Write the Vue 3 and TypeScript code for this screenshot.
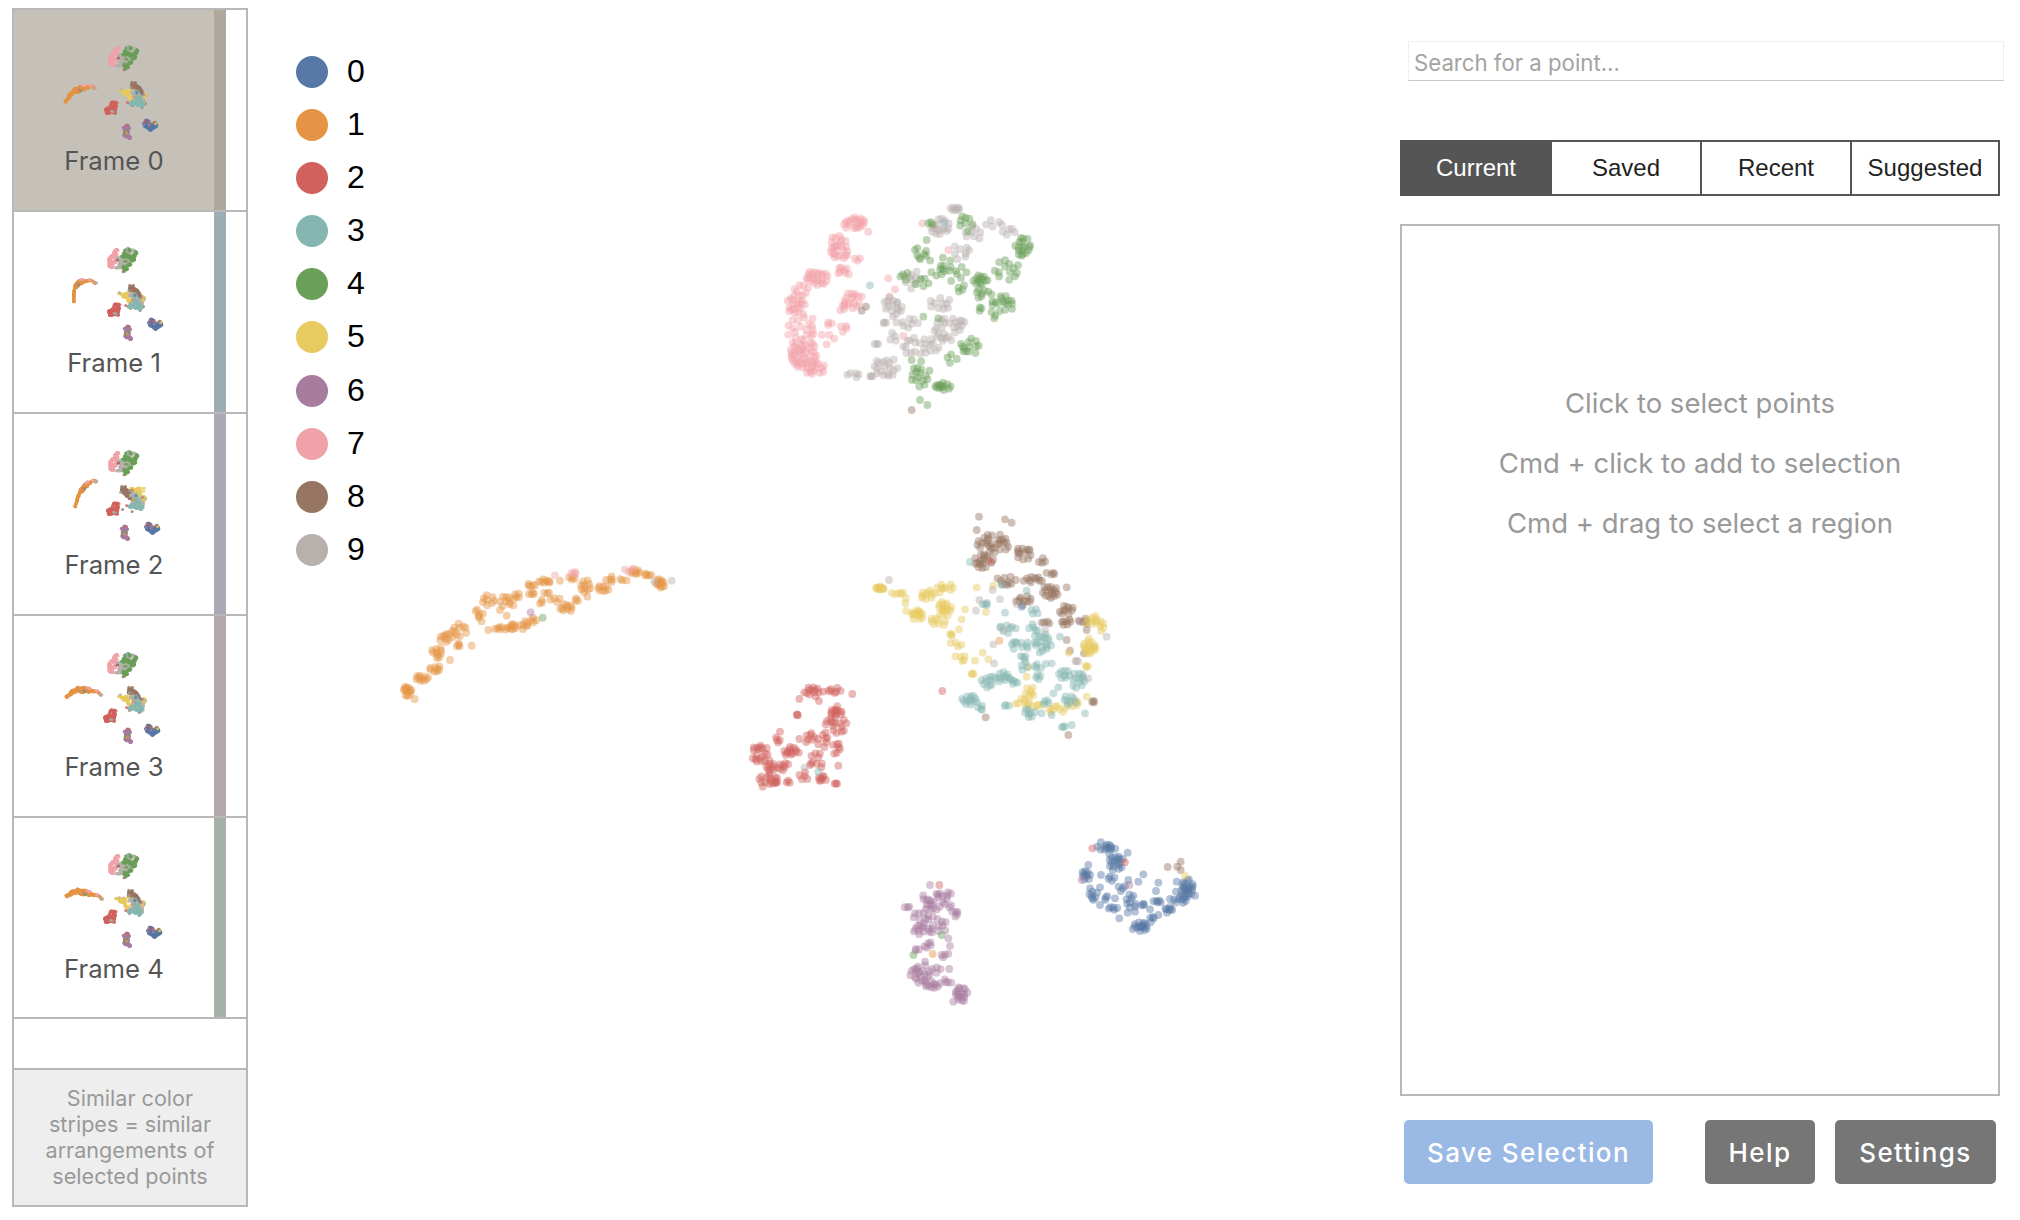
<script setup lang="ts">
const colors = ['#5778a4', '#e49444', '#d1615d', '#85b6b2', '#6a9f58', '#e7ca60', '#a87c9f', '#f1a2a9', '#967662', '#b8b0ac']
const tabs = ['Current', 'Saved', 'Recent', 'Suggested']

type Group = 'top' | 'orange' | 'brown' | 'yellow' | 'teal' | 'red' | 'purple' | 'blue'
interface Cluster {
  color: number
  group: Group
  ox: number
  oy: number
  // [x, y] is one point, [x, y, rx, ry, n] is n points sprayed in an ellipse. Units are 1/3 px.
  blobs: number[][]
}
interface Point {
  x: number
  y: number
  color: number
  group: Group
}

const clusters: Cluster[] = [
  { color: 7, group: 'top', ox: 760, oy: 190, blobs: [[285, 100, 35, 20, 16], [235, 150, 25, 15, 6], [240, 185, 30, 25, 14], [170, 265, 35, 25, 18], [125, 300, 25, 20, 6], [105, 345, 30, 30, 14], [125, 420, 45, 50, 18], [130, 490, 40, 45, 30], [160, 535, 35, 25, 12], [280, 330, 30, 25, 12], [250, 245, 20, 15, 6], [245, 355, 10, 15, 3], [255, 415, 15, 15, 3], [210, 400, 10, 10, 2], [205, 440, 20, 25, 3], [295, 208, 12, 6, 2], [325, 125], [385, 265], [388, 320], [430, 438], [487, 100], [565, 180], [405, 298]] },
  { color: 9, group: 'top', ox: 760, oy: 190, blobs: [[585, 55, 15, 8, 5], [540, 110, 30, 25, 12], [640, 130, 30, 25, 6], [700, 100, 30, 10, 4], [745, 125, 20, 10, 4], [600, 190, 30, 25, 6], [460, 270, 30, 30, 8], [400, 350, 30, 30, 12], [540, 340, 40, 25, 8], [440, 400, 40, 15, 6], [560, 420, 40, 40, 16], [480, 470, 60, 30, 16], [380, 530, 40, 30, 14], [280, 555, 20, 8, 4], [335, 558, 5, 1, 2], [350, 462, 6, 1, 2], [375, 398, 6, 1, 2], [600, 400, 15, 10, 4], [400, 440, 15, 15, 3]] },
  { color: 4, group: 'top', ox: 760, oy: 190, blobs: [[620, 100, 20, 30, 6], [510, 100, 10, 10, 2], [480, 190, 20, 20, 6], [500, 150], [540, 230, 40, 30, 10], [600, 260, 30, 30, 5], [430, 255, 15, 20, 3], [490, 280, 25, 15, 4], [660, 270, 25, 15, 10], [670, 310, 30, 15, 6], [740, 240, 40, 35, 10], [790, 170, 25, 30, 14], [730, 340, 35, 25, 12], [660, 360, 5, 10, 2], [700, 375, 15, 10, 2], [630, 470, 30, 25, 10], [580, 510, 20, 20, 3], [480, 550, 30, 40, 12], [550, 590, 25, 12, 10], [480, 630], [502, 645], [490, 380], [535, 385], [600, 300, 10, 10, 2], [455, 510]] },
  { color: 8, group: 'top', ox: 760, oy: 190, blobs: [[455, 660], [305, 362], [318, 350]] },
  { color: 3, group: 'top', ox: 760, oy: 190, blobs: [[330, 286], [552, 98]] },

  { color: 8, group: 'brown', ox: 860, oy: 500, blobs: [[400, 130, 50, 30, 22], [370, 180, 30, 25, 14], [490, 160, 25, 20, 10], [350, 90], [357, 50], [435, 58], [455, 68], [440, 240, 30, 15, 8], [520, 240, 30, 10, 8], [570, 275, 25, 20, 12], [490, 300, 25, 15, 8], [620, 330, 25, 15, 8], [620, 365, 15, 15, 5], [560, 368, 15, 5, 3], [545, 180, 15, 10, 3], [570, 220, 15, 5, 3], [620, 262], [670, 365, 15, 10, 4], [680, 390], [620, 420], [630, 452], [672, 460], [700, 605, 5, 3, 2], [625, 705], [377, 652]] },
  { color: 5, group: 'yellow', ox: 860, oy: 500, blobs: [[62, 264, 15, 5, 8], [110, 278, 20, 5, 4], [135, 318, 8, 25, 2], [170, 345, 20, 15, 10], [200, 285, 25, 15, 8], [255, 265, 30, 15, 7], [255, 325, 20, 25, 12], [235, 365, 25, 15, 6], [272, 405, 5, 5, 2], [297, 388], [305, 358], [315, 328], [350, 262], [400, 257], [378, 336], [285, 435, 20, 8, 3], [300, 475, 20, 10, 4], [345, 482], [368, 458], [385, 478], [338, 522, 3, 3, 2]] },
  { color: 5, group: 'teal', ox: 860, oy: 500, blobs: [[500, 530], [510, 575, 15, 15, 5], [490, 605, 30, 10, 5], [520, 615, 25, 10, 4], [590, 625, 30, 15, 6], [640, 610, 15, 10, 4], [700, 360, 30, 15, 8], [730, 385, 10, 15, 3], [690, 440, 20, 25, 14], [680, 497, 5, 5, 2], [626, 458], [680, 590], [505, 500]] },
  { color: 3, group: 'teal', ox: 860, oy: 500, blobs: [[330, 186], [425, 255], [375, 310, 12, 6, 3], [435, 338], [440, 385, 30, 15, 6], [520, 385, 15, 15, 4], [480, 435, 30, 15, 8], [545, 430, 30, 30, 14], [490, 470, 10, 10, 3], [600, 410], [520, 335, 15, 10, 3], [500, 272], [490, 500, 15, 15, 3], [540, 495, 30, 10, 4], [575, 490], [610, 520, 20, 15, 6], [650, 540, 25, 25, 10], [420, 530, 30, 15, 10], [460, 545, 15, 8, 4], [380, 550, 20, 15, 6], [330, 600, 25, 15, 10], [360, 620, 8, 15, 3], [440, 615, 10, 5, 2], [510, 640, 20, 15, 6], [560, 610, 10, 10, 3], [630, 600, 20, 20, 6], [610, 680, 5, 3, 2], [635, 675], [575, 645], [545, 640], [675, 640], [535, 530, 8, 8, 3], [580, 580], [595, 562]] },
  { color: 9, group: 'teal', ox: 860, oy: 500, blobs: [[87, 240], [398, 270], [358, 300], [348, 332], [420, 298], [470, 312], [400, 433], [402, 490], [430, 388], [555, 390], [652, 483, 8, 3, 2], [740, 410], [685, 535]] },
  { color: 2, group: 'teal', ox: 860, oy: 500, blobs: [[247, 573], [392, 185]] },
  { color: 1, group: 'teal', ox: 860, oy: 500, blobs: [[418, 422]] },
  { color: 0, group: 'teal', ox: 860, oy: 500, blobs: [[485, 320]] },
  { color: 6, group: 'teal', ox: 860, oy: 500, blobs: [[660, 365]] },

  { color: 1, group: 'orange', ox: 390, oy: 550, blobs: [[50, 425, 15, 15, 10], [74, 447], [95, 385, 20, 10, 8], [135, 355, 15, 12, 6], [140, 305, 15, 20, 8], [180, 330], [245, 287], [165, 265, 25, 15, 8], [205, 285, 6, 6, 3], [210, 240, 25, 20, 8], [270, 195, 15, 25, 5], [295, 150, 20, 20, 6], [295, 240], [335, 235, 25, 5, 5], [365, 230, 15, 8, 6], [405, 225, 15, 15, 5], [430, 210, 10, 8, 3], [350, 155, 25, 20, 8], [385, 135, 10, 10, 3], [330, 180], [350, 197], [425, 105, 15, 6, 4], [425, 130, 10, 5, 3], [460, 95, 20, 8, 6], [470, 125, 10, 6, 2], [455, 155, 8, 10, 2], [495, 150, 20, 8, 3], [530, 175, 20, 15, 8], [560, 150, 10, 5, 2], [545, 85, 10, 6, 3], [590, 110, 20, 20, 8], [640, 115, 20, 8, 6], [660, 90, 15, 12, 4], [700, 90, 15, 8, 2], [735, 65, 15, 8, 6], [770, 75, 15, 6, 4], [810, 100, 15, 15, 10], [510, 92], [592, 140]] },
  { color: 7, group: 'orange', ox: 390, oy: 550, blobs: [[495, 76], [555, 70, 12, 5, 3], [705, 58], [730, 55], [715, 65]] },
  { color: 4, group: 'orange', ox: 390, oy: 550, blobs: [[458, 203]] },
  { color: 6, group: 'orange', ox: 390, oy: 550, blobs: [[422, 187]] },
  { color: 9, group: 'orange', ox: 390, oy: 550, blobs: [[845, 92], [793, 95]] },

  { color: 2, group: 'red', ox: 740, oy: 670, blobs: [[220, 65, 30, 15, 10], [285, 60, 20, 10, 5], [178, 87], [237, 93], [337, 72], [172, 135, 3, 4, 2], [290, 125, 18, 18, 10], [300, 170, 25, 25, 8], [265, 155, 15, 10, 4], [250, 210, 20, 25, 6], [210, 205, 15, 20, 5], [178, 207], [120, 185], [115, 210, 12, 10, 3], [60, 250, 25, 30, 14], [90, 290, 15, 20, 8], [155, 245, 25, 15, 10], [130, 290, 20, 15, 6], [85, 330, 30, 15, 12], [245, 325, 15, 10, 6], [190, 320, 15, 15, 4], [230, 270, 30, 25, 7], [290, 240, 15, 25, 5], [295, 287], [285, 340, 8, 3, 2], [210, 285], [145, 335, 10, 5, 2], [68, 350]] },
  { color: 9, group: 'red', ox: 740, oy: 670, blobs: [[193, 293]] },
  { color: 3, group: 'red', ox: 740, oy: 670, blobs: [[235, 305]] },

  { color: 6, group: 'purple', ox: 890, oy: 870, blobs: [[120, 45], [160, 75, 25, 10, 6], [105, 85, 15, 10, 3], [125, 110, 25, 20, 8], [50, 110, 8, 3, 2], [170, 100, 15, 20, 4], [100, 140, 30, 20, 8], [195, 130, 15, 15, 4], [100, 180, 30, 15, 10], [150, 170, 25, 25, 6], [175, 205], [115, 225, 15, 10, 4], [180, 228], [80, 240, 10, 5, 2], [165, 255, 15, 8, 3], [90, 310, 30, 30, 16], [140, 300, 15, 10, 3], [130, 345, 25, 12, 8], [175, 335, 20, 8, 3], [178, 297], [215, 370, 20, 25, 14], [190, 395], [105, 275]] },
  { color: 2, group: 'purple', ox: 890, oy: 870, blobs: [[148, 45]] },
  { color: 4, group: 'purple', ox: 890, oy: 870, blobs: [[155, 195], [70, 255]] },
  { color: 1, group: 'purple', ox: 890, oy: 870, blobs: [[128, 252]] },

  { color: 0, group: 'blue', ox: 1070, oy: 830, blobs: [[100, 50, 20, 15, 6], [125, 55, 15, 8, 4], [135, 95, 25, 30, 14], [125, 145, 10, 10, 3], [173, 68], [55, 105], [50, 135, 15, 15, 8], [93, 135], [60, 175], [70, 195, 15, 15, 5], [90, 172], [110, 205, 10, 10, 2], [90, 225], [130, 235, 15, 5, 4], [155, 175, 15, 10, 3], [135, 205], [175, 150], [205, 155], [220, 133], [265, 158], [258, 183], [180, 205, 12, 15, 4], [185, 225, 15, 10, 3], [220, 225, 5, 5, 2], [240, 238], [173, 248], [195, 245], [148, 265], [210, 290, 25, 15, 12], [245, 270, 15, 10, 3], [265, 255], [260, 215, 15, 5, 4], [295, 240, 12, 10, 5], [300, 207], [330, 210, 20, 10, 6], [350, 175, 20, 30, 18], [375, 197], [320, 155], [318, 185]] },
  { color: 2, group: 'blue', ox: 1070, oy: 830, blobs: [[67, 55], [165, 97]] },
  { color: 6, group: 'blue', ox: 1070, oy: 830, blobs: [[35, 150], [178, 165]] },
  { color: 8, group: 'blue', ox: 1070, oy: 830, blobs: [[293, 111], [332, 95], [322, 110], [332, 120]] },
  { color: 5, group: 'blue', ox: 1070, oy: 830, blobs: [[345, 137]] },
]

// small seeded generator so the cloud is the same on every load
let seed = 20417
function rnd(): number {
  seed = (seed + 0x6d2b79f5) | 0
  let t = Math.imul(seed ^ (seed >>> 15), 1 | seed)
  t = (t + Math.imul(t ^ (t >>> 7), 61 | t)) ^ t
  return ((t ^ (t >>> 14)) >>> 0) / 4294967296
}

const points: Point[] = []
for (const c of clusters) {
  const own: Point[] = []
  for (const b of c.blobs) {
    const n = b.length > 2 ? Math.round(b[4] * 1.3) : 1
    for (let i = 0; i < n; i++) {
      // try a few spots and keep the emptiest one, plain random clumps too much
      let best: Point | null = null
      let bestGap = -1
      for (let k = 0; k < 4; k++) {
        const a = rnd() * Math.PI * 2
        const r = b.length > 2 ? Math.sqrt(rnd()) : 0
        const cand: Point = {
          x: c.ox + (b[0] + Math.cos(a) * r * (b[2] ?? 0)) / 3,
          y: c.oy + (b[1] + Math.sin(a) * r * (b[3] ?? 0)) / 3,
          color: c.color,
          group: c.group,
        }
        let gap = Infinity
        for (const o of own) gap = Math.min(gap, Math.hypot(o.x - cand.x, o.y - cand.y))
        if (gap > bestGap) {
          bestGap = gap
          best = cand
        }
      }
      own.push(best as Point)
    }
  }
  points.push(...own)
}

type Offsets = Record<Exclude<Group, 'orange'>, [number, number]>
interface FrameDef {
  label: string
  stripe: string
  arc: [number, number, number, number, number, number]
  shift: Offsets
}

const frameDefs: FrameDef[] = [
  { label: 'Frame 0', stripe: '#b0a89c', arc: [51, 92, 66, 76, 82, 78],
    shift: { top: [0, 0], brown: [0, 0], yellow: [0, 0], teal: [0, 0], red: [0, 0], purple: [0, 0], blue: [0, 0] } },
  { label: 'Frame 1', stripe: '#9dadb3', arc: [60, 90, 58, 65, 83, 71],
    shift: { top: [-1, 0], brown: [-2, 1], yellow: [-1, 1], teal: [-2, 1], red: [3, 0], purple: [1, -1], blue: [5, -3] } },
  { label: 'Frame 2', stripe: '#a8a8b7', arc: [61, 93, 69, 69, 83, 67],
    shift: { top: [0, 1], brown: [-10, 0], yellow: [11, -6], teal: [-1, -1], red: [2, -3], purple: [-2, -3], blue: [2, -1] } },
  { label: 'Frame 3', stripe: '#b5a6a9', arc: [52, 81, 71, 71, 88, 79],
    shift: { top: [-1, 1], brown: [-3, -1], yellow: [-1, 0], teal: [-1, -1], red: [-1, 2], purple: [1, -2], blue: [2, -1] } },
  { label: 'Frame 4', stripe: '#a4b0a8', arc: [52, 78, 71, 73, 89, 81],
    shift: { top: [0, 0], brown: [-3, 0], yellow: [-4, 0], teal: [-2, 0], red: [-1, 1], purple: [0, 0], blue: [4, -1] } },
]

const SCALE = 0.116

function thumbPoint(p: Point, f: FrameDef): { x: number; y: number; color: number } {
  if (p.group === 'orange') {
    // the orange arm bends differently per frame, so run it along a curve
    const t = (p.x - 403) / 270
    const base = 695 - 200 * t + 85 * t * t
    const [ax, ay, bx, by, cx, cy] = f.arc
    const s = 1 - t
    return {
      x: s * s * ax + 2 * s * t * bx + t * t * cx,
      y: s * s * ay + 2 * s * t * by + t * t * cy + (p.y - base) * SCALE,
      color: p.color,
    }
  }
  const [dx, dy] = f.shift[p.group]
  return {
    x: 51 + (p.x - 403) * SCALE + dx,
    y: 36 + (p.y - 205) * SCALE + dy,
    color: p.color,
  }
}

const frames = frameDefs.map((f) => ({
  label: f.label,
  stripe: f.stripe,
  dots: points.map((p) => thumbPoint(p, f)),
}))
</script>

<template>
  <div class="app">
    <aside class="sidebar">
      <div
        v-for="(f, i) in frames"
        :key="f.label"
        class="frame"
      >
        <div class="frame-cell" :class="{ selected: i === 0 }">
          <svg class="thumb" viewBox="0 0 200 140" width="200" height="140">
            <circle
              v-for="(d, j) in f.dots"
              :key="j"
              :cx="d.x"
              :cy="d.y"
              r="1.5"
              :fill="colors[d.color]"
              fill-opacity="0.8"
            />
          </svg>
          <div class="frame-label">{{ f.label }}</div>
        </div>
        <div class="stripe" :style="{ background: f.stripe }"></div>
      </div>
      <div class="spacer"></div>
      <div class="note">Similar color stripes = similar arrangements of selected points</div>
    </aside>

    <main class="canvas">
      <svg class="scatter" viewBox="248 0 1152 1220" width="1152" height="1220">
        <circle
          v-for="(p, i) in points"
          :key="i"
          :cx="p.x"
          :cy="p.y"
          r="3.9"
          :fill="colors[p.color]"
          fill-opacity="0.45"
        />
      </svg>
      <ul class="legend">
        <li v-for="(c, i) in colors" :key="c">
          <span class="swatch" :style="{ background: c }"></span>
          <span class="legend-label">{{ i }}</span>
        </li>
      </ul>
    </main>

    <section class="panel">
      <input class="search" type="text" placeholder="Search for a point..." />
      <div class="tabs">
        <div v-for="(t, i) in tabs" :key="t" class="tab" :class="{ active: i === 0 }">{{ t }}</div>
      </div>
      <div class="selection">
        <p>Click to select points</p>
        <p>Cmd + click to add to selection</p>
        <p>Cmd + drag to select a region</p>
      </div>
      <div class="actions">
        <button class="btn save">Save Selection</button>
        <button class="btn help">Help</button>
        <button class="btn settings">Settings</button>
      </div>
    </section>
  </div>
</template>

<style scoped>
.app {
  display: flex;
  width: 2020px;
  height: 1220px;
  overflow: hidden;
  background: #fff;
  font-family: Inter, "Liberation Sans", sans-serif;
}

.sidebar {
  box-sizing: border-box;
  width: 236px;
  height: 1199px;
  margin: 8px 0 0 12px;
  border: 2px solid #b8b8b8;
  display: flex;
  flex-direction: column;
  flex-shrink: 0;
}

.frame {
  box-sizing: border-box;
  height: 201.9px;
  border-bottom: 2px solid #b8b8b8;
  display: flex;
}

.frame-cell {
  width: 200px;
  display: flex;
  flex-direction: column;
  align-items: center;
}

.frame-cell.selected {
  background: #c5c1b9;
}

.thumb {
  display: block;
  flex-shrink: 0;
  filter: blur(0.3px);
}

.frame-label {
  margin-top: -4px;
  font-size: 25.7px;
  line-height: 30px;
  color: #555;
}

.stripe {
  width: 12px;
}

.spacer {
  flex: 1;
}

.note {
  box-sizing: border-box;
  height: 137px;
  padding: 15px 16px 0;
  border-top: 2px solid #b8b8b8;
  background: #eee;
  color: #999;
  font-size: 21.6px;
  line-height: 26px;
  text-align: center;
}

.canvas {
  position: relative;
  width: 1152px;
  flex-shrink: 0;
}

.scatter {
  position: absolute;
  top: 0;
  left: 0;
  filter: blur(0.5px);
}

.legend {
  position: relative;
  list-style: none;
  margin: 0;
  padding: 56px 0 0 48px;
  display: flex;
  flex-direction: column;
  gap: 21.1px;
  font-family: "Liberation Sans", sans-serif;
}

.legend li {
  display: flex;
  align-items: center;
  gap: 19px;
  height: 32px;
}

.swatch {
  width: 32px;
  height: 32px;
  border-radius: 50%;
}

.legend-label {
  font-size: 32px;
  line-height: 30px;
  margin-top: -2px;
  color: #000;
}

.panel {
  width: 600px;
  flex-shrink: 0;
  display: flex;
  flex-direction: column;
  padding-top: 41px;
}

.search {
  box-sizing: border-box;
  width: 596px;
  height: 40px;
  margin-left: 8px;
  padding: 2px 0 0 5px;
  border: 1px solid #efefef;
  border-bottom: 1.5px solid #c8c8c8;
  outline: none;
  font-family: Inter, sans-serif;
  font-size: 22.2px;
  color: #333;
}

.search::placeholder {
  color: #a3a3a3;
  opacity: 1;
}

.tabs {
  display: flex;
  margin-top: 59px;
  height: 56px;
  border: 2px solid #555;
  box-sizing: border-box;
  font-family: "Liberation Sans", sans-serif;
  font-size: 24px;
  color: #222;
}

.tab {
  flex: none;
  box-sizing: border-box;
  width: 150px;
  display: flex;
  align-items: center;
  justify-content: center;
  border-left: 2px solid #555;
}

.tab:first-child {
  width: 148px;
  border-left: 0;
}

.tab:last-child {
  width: 148px;
}

.tab.active {
  background: #555;
  color: #fff;
}

.selection {
  box-sizing: border-box;
  height: 872px;
  margin-top: 28px;
  padding-top: 147px;
  border: 2px solid #b8b8b8;
  text-align: center;
  color: #999;
  font-size: 27.5px;
  line-height: 60px;
}

.selection p {
  margin: 0;
}

.actions {
  display: flex;
  gap: 20px;
  margin-top: 24px;
  padding: 0 4px;
}

.btn {
  height: 64px;
  border: 0;
  border-radius: 5px;
  color: #fff;
  font-family: Inter, sans-serif;
  font-size: 26px;
  font-weight: 500;
  letter-spacing: 1.4px;
  padding: 0;
}

.save {
  width: 249px;
  background: #9ab9e5;
  margin-right: 32px;
}

.help {
  width: 110px;
  background: #767676;
}

.settings {
  width: 161px;
  background: #767676;
}
</style>

<style>
html,
body {
  margin: 0;
  background: #fff;
  overflow: hidden;
}
</style>
